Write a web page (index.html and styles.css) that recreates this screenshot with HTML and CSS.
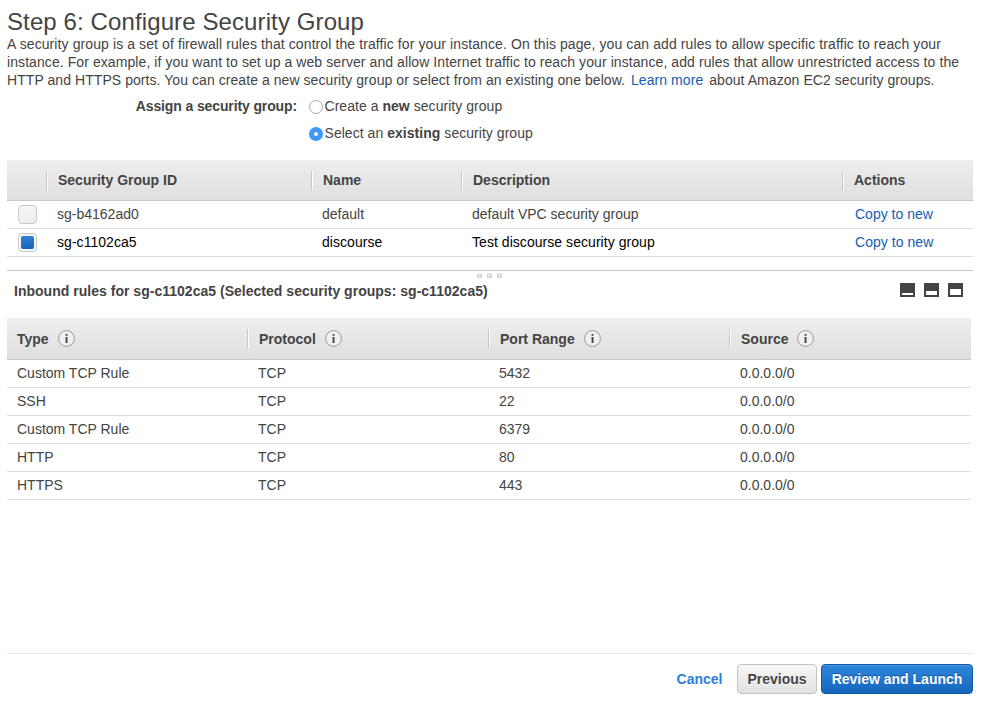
FILE: index.html
```html
<!DOCTYPE html>
<html lang="en">
<head>
<meta charset="utf-8">
<title>Configure Security Group</title>
<link rel="stylesheet" href="styles.css">
</head>
<body>
<svg class="defs" aria-hidden="true">
  <symbol id="info" viewBox="0 0 18 18">
    <circle cx="8.5" cy="8.5" r="7.9" fill="#f0f0f0" stroke="#999" stroke-width="1"/>
    <path d="M7.6 4h1.9v1.7H7.6zM7.6 7h1.9v6H7.6z" fill="#444"/>
    <path d="M6.8 7h.8v.8h-.8z" fill="#888"/>
  </symbol>
</svg>
<main class="page">
  <h1>Step 6: Configure Security Group</h1>
  <p class="intro">
    <span class="line l1">A security group is a set of firewall rules that control the traffic for your instance. On this page, you can add rules to allow specific traffic to reach your</span>
    <span class="line l2">instance. For example, if you want to set up a web server and allow Internet traffic to reach your instance, add rules that allow unrestricted access to the</span>
    <span class="line l3">HTTP and HTTPS ports. You can create a new security group or select from an existing one below. <a class="learn">Learn more</a> about Amazon EC2 security groups.</span>
  </p>
  <div class="assign">
    <div class="assign-label">Assign a security group:</div>
    <div class="options">
      <label class="option"><i class="radio"></i><span>Create a <b>new</b> security group</span></label>
      <label class="option"><i class="radio on"></i><span>Select an <b>existing</b> security group</span></label>
    </div>
  </div>

  <section class="groups">
    <div class="row head"><div></div><div class="sep">Security Group ID</div><div class="sep">Name</div><div class="sep">Description</div><div class="sep">Actions</div></div>
    <div class="row"><div><i class="check"></i></div><div>sg-b4162ad0</div><div>default</div><div>default VPC security group</div><div><a>Copy to new</a></div></div>
    <div class="row selected"><div><i class="check on"></i></div><div>sg-c1102ca5</div><div>discourse</div><div>Test discourse security group</div><div><a>Copy to new</a></div></div>
  </section>

  <div class="splitter"><i></i><i></i><i></i></div>

  <div class="rules-bar">
    <h2>Inbound rules for sg-c1102ca5 (Selected security groups: sg-c1102ca5)</h2>
    <div class="panes"><i class="pane low"></i><i class="pane mid"></i><i class="pane high"></i></div>
  </div>

  <section class="rules">
    <div class="row head"><div><span>Type</span><svg class="info"><use href="#info"/></svg></div><div class="sep"><span>Protocol</span><svg class="info"><use href="#info"/></svg></div><div class="sep"><span>Port Range</span><svg class="info"><use href="#info"/></svg></div><div class="sep"><span>Source</span><svg class="info"><use href="#info"/></svg></div></div>
    <div class="row"><div>Custom TCP Rule</div><div>TCP</div><div>5432</div><div>0.0.0.0/0</div></div>
    <div class="row"><div>SSH</div><div>TCP</div><div>22</div><div>0.0.0.0/0</div></div>
    <div class="row"><div>Custom TCP Rule</div><div>TCP</div><div>6379</div><div>0.0.0.0/0</div></div>
    <div class="row"><div>HTTP</div><div>TCP</div><div>80</div><div>0.0.0.0/0</div></div>
    <div class="row"><div>HTTPS</div><div>TCP</div><div>443</div><div>0.0.0.0/0</div></div>
  </section>

  <footer>
    <a class="cancel">Cancel</a>
    <button class="btn previous">Previous</button>
    <button class="btn launch">Review and Launch</button>
  </footer>
</main>
</body>
</html>
```
FILE: styles.css
```css
* { box-sizing: border-box; }
body {
  margin: 0;
  background: #fff;
  color: #444;
  font: 14px/18px "Liberation Sans", Arial, sans-serif;
}
a { color: #145eb4; }
.defs { display: none; }
.page {
  display: flex;
  flex-direction: column;
  height: 705px;
  padding: 8px 9px 11px 7px;
}
h1 {
  margin: 0;
  font-size: 24px;
  font-weight: 400;
  letter-spacing: 0.11px;
  line-height: 27px;
  white-space: nowrap;
}
.intro { margin: 0; }
.line { display: block; white-space: nowrap; }
.l1 { letter-spacing: 0.097px; }
.l2 { letter-spacing: 0.079px; }
.l3 { letter-spacing: 0.062px; }
.learn { margin: 0 2px; }
.assign { display: flex; height: 54px; margin-top: 4px; }
.assign-label {
  width: 290px;
  font-weight: 700;
  letter-spacing: -0.12px;
  line-height: 27px;
  text-align: right;
}
.options { margin-left: 12px; }
.option {
  display: flex;
  align-items: center;
  height: 27px;
  padding-bottom: 1px;
  gap: 1.5px;
  letter-spacing: 0.04px;
}
.radio {
  width: 14px;
  height: 14px;
  margin-top: 2px;
  border: 1px solid #a9a9a9;
  border-radius: 50%;
  background: #fff;
}
.radio.on { border: 5px solid #3b99fc; }

.groups { margin-top: 13px; }
.row {
  display: grid;
  align-items: center;
  height: 28px;
  border-bottom: 1px solid #ddd;
}
.groups .row { grid-template-columns: 39px 265px 150px 381px 1fr; }
.rules .row { grid-template-columns: 240px 241px 241px 1fr; }
.row > div { display: flex; align-items: center; padding-left: 11px; }
.row:not(.head) > div { height: 27px; padding-bottom: 2px; }
.row.head {
  height: 41px;
  border-bottom-color: #c8c8c8;
  background: linear-gradient(#eee, #dfdfdf);
  font-weight: 700;
}
.row.head .sep {
  height: 19px;
  border-left: 1px solid #c6c6c6;
  box-shadow: inset 1px 0 #fff;
}
.groups .row > div:last-child { padding-left: 13px; }
.groups .head > div:last-child { padding-left: 11px; }
.groups .row:not(.head) > div:first-child { padding-bottom: 0; }
.row.selected { color: #000; letter-spacing: 0.05px; }
.check {
  width: 19px;
  height: 19px;
  border: 1px solid #c8c8c8;
  border-radius: 4px;
  background: linear-gradient(#f5f5f5, #eee);
}
.check.on { padding: 2px; background: #f5f5f5; }
.check.on::before {
  content: "";
  display: block;
  height: 13px;
  border-radius: 2px;
  background: linear-gradient(#2e83d6, #1664b8);
}

.splitter {
  display: flex;
  justify-content: center;
  gap: 5px;
  height: 10px;
  margin-top: 13px;
  padding: 2px 2px 0 0;
  border-top: 1px solid #c8c8c8;
}
.splitter i {
  width: 5px;
  height: 5px;
  border: 1px solid #c4c4c4;
  border-top-color: #ddd;
  border-radius: 50%;
  background: #eee;
}
.rules-bar {
  display: flex;
  justify-content: space-between;
  height: 38px;
  padding: 2px 10px 0 7px;
}
h2 {
  margin: 0;
  font-size: 14px;
  letter-spacing: 0.02px;
  line-height: 18px;
  white-space: nowrap;
}
.panes { display: flex; gap: 9px; padding-top: 1px; }
.pane {
  width: 15px;
  height: 14px;
  border: 2px solid #444;
  background: #fff;
}
.pane.low { border-top-width: 10px; }
.pane.mid { border-top-width: 8px; }
.pane.high { border-top-width: 6px; }

.rules { margin-right: 2px; }
.rules .row > div { padding-left: 11px; }
.rules .row > div:first-child { padding-left: 10px; }
.rules .row.head { height: 42px; }
.info { width: 18px; height: 18px; margin-left: 9px; }

footer {
  display: flex;
  align-items: center;
  justify-content: flex-end;
  height: 41px;
  margin-top: auto;
  padding-top: 10px;
  border-top: 1px solid #e8e8e8;
}
.cancel { margin-right: 14.5px; color: #2e7de1; font-weight: 700; }
.btn {
  height: 30px;
  padding: 0;
  border: 1px solid #c4c4c4;
  border-radius: 4px;
  background: linear-gradient(#f7f7f7, #e2e2e2);
  color: #444;
  font: 700 14px/28px "Liberation Sans", Arial, sans-serif;
  text-shadow: 0 1px #fff;
  white-space: nowrap;
}
.previous { width: 80px; margin-right: 4px; }
.launch {
  width: 152px;
  border-color: #1459a8;
  background: linear-gradient(#2e87dc, #1566bb);
  box-shadow: inset 0 1px #4b97e0;
  color: #fff;
  text-shadow: 0 -1px #14549c;
}
```
